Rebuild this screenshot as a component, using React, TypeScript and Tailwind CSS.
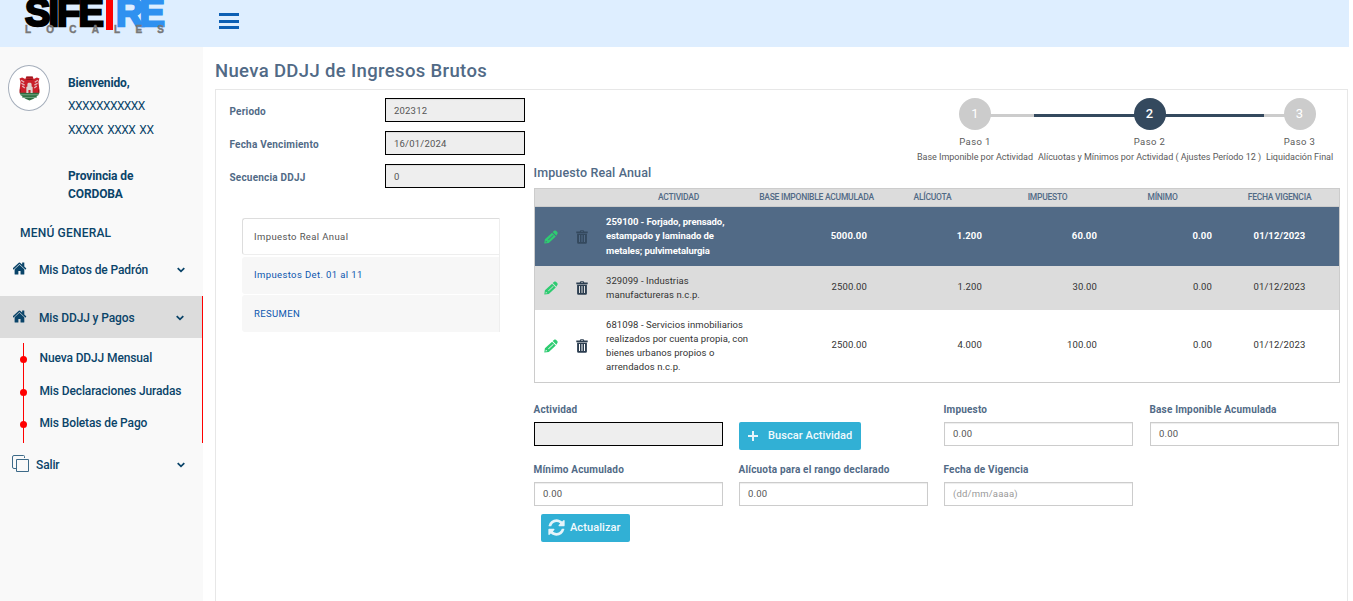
import React from "react";

const Home = () => (
  <svg viewBox="64 0 1664 1792" preserveAspectRatio="none" className="mb-[3px] ml-px h-[17px] w-[14px] shrink-0 fill-[#0a4469]">
    <path d="M1408 992v480q0 26-19 45t-45 19h-384v-384h-256v384h-384q-26 0-45-19t-19-45v-480q0-1 .5-3t.5-3l575-474 575 474q1 2 1 6zm223-69l-62 74q-8 9-21 11h-3q-13 0-21-7l-692-577-692 577q-12 8-24 7-13-2-21-11l-62-74q-8-10-7-23.5t11-21.5l719-599q32-26 76-26t76 26l244 204v-195q0-14 9-23t23-9h192q14 0 23 9t9 23v408l219 182q10 8 11 21.5t-7 23.5z" />
  </svg>
);

const Refresh = () => (
  <svg viewBox="0 0 1792 1792" className="-mt-[2px] h-[19px] w-[19px] shrink-0 fill-[#e6f4fa]">
    <path d="M1639 1056q0 5-1 7-64 268-268 434.5t-478 166.5q-146 0-282.5-55t-243.5-157l-129 129q-19 19-45 19t-45-19-19-45v-448q0-26 19-45t45-19h448q26 0 45 19t19 45-19 45l-137 137q71 66 161 102t187 36q134 0 250-65t186-179q11-17 53-117 8-23 30-23h192q13 0 22.5 9.5t9.5 22.5zm25-800v448q0 26-19 45t-45 19h-448q-26 0-45-19t-19-45 19-45l138-138q-148-137-349-137-134 0-250 65t-186 179q-11 17-53 117-8 23-30 23h-199q-13 0-22.5-9.5t-9.5-22.5v-7q65-268 270-434.5t480-166.5q146 0 284 55.5t245 156.5l130-129q19-19 45-19t45 19 19 45z" />
  </svg>
);

const Pencil = () => (
  <svg viewBox="0 0 14 14" className="h-[14px] w-[14px] fill-[#2ecc71]">
    <path fillRule="evenodd" d="M0.3 13.5 0.9 9.2 8.1 2.7 11.8 6.4 4.8 13zM1.5 12.4 3.2 12.1 1.9 10.8zM4.1 9.7 4.6 10.2 9.6 5.4 9.1 4.9zM8.7 2.1 10.5 0.6Q11.3 0.1 12 0.8L13.4 2.2Q14 3 13.5 3.7L12.4 5.8z" />
  </svg>
);

const Trash = ({ className }: { className: string }) => (
  <svg viewBox="0 0 12 14" className={"h-[14px] w-[12px] " + className}>
    <path fillRule="evenodd" d="M3.8 1.2Q4 0.2 5 0.2H7Q8 0.2 8.2 1.2V1.5H11.7V3.3H0.3V1.5H3.8zM5 1.1V1.6H7V1.1zM1.1 3.8H10.9V12.6Q10.9 13.8 9.7 13.8H2.3Q1.1 13.8 1.1 12.6zM3 5V12H4V5zM5.5 5V12H6.5V5zM8 5V12H9V5z" />
  </svg>
);

const Chevron = () => (
  <svg viewBox="0 0 8 6" className="h-[6px] w-[8px] fill-none stroke-[#0a4469] stroke-[1.8]">
    <path d="M0.7 1.2 4 4.3 7.3 1.2" />
  </svg>
);

const Crest = () => (
  <svg viewBox="0 0 20 26" preserveAspectRatio="none" className="h-[25px] w-[21px]">
    <path d="M0.5 2.5 3 1.5 6 3 7 0.5H13L14 3 17 1.5 19.5 2.5 18.5 6 19.4 14V18H0.6V14L1.5 6z" fill="#c9202a" />
    <path d="M0.6 17.5H19.4Q17.6 23 10 25.5 2.4 23 0.6 17.5z" fill="#2f7043" />
    <path d="M1 19.5H19M3 22.3H17" stroke="#78a887" strokeWidth="0.9" />
    <path d="M7 17.8V11.5L8 11V8L9 7H11L12 8V11L13 11.5V17.8H11V14.5H9V17.8z" fill="#ded3cf" />
    <path d="M2 4.5 5 6.5M2.3 7.5 5.3 9.5M3 10.5 5.5 12.5M18 4.5 15 6.5M17.7 7.5 14.7 9.5M17 10.5 14.5 12.5" stroke="#e3b4b8" strokeWidth="1.3" />
    <path d="M7 1.2H13M7 3.5H13M1.2 14V17M18.8 14V17" stroke="#761316" strokeWidth="0.8" />
  </svg>
);

function MenuItem({ label }: { label: string }) {
  return (
    <div className="flex h-full items-center pl-3">
      <Home />
      <span className="ml-3 flex-1">{label}</span>
      <span className="mr-[18px]"><Chevron /></span>
    </div>
  );
}

function ReadOnly({ label, value }: { label: string; value: string }) {
  return (
    <div className="flex h-[33px] items-start">
      <span className="-ml-[0.5px] w-[155.5px] pt-[6px] text-[10px] font-bold leading-[16px] tracking-[0.2px] text-[#516a86]">{label}</span>
      <div className="h-[24px] w-[140px] border border-black bg-[#eee] pl-2 text-[9.5px] leading-[23px] tracking-[0.2px] text-[#555] shadow-[inset_0_1px_1px_rgba(0,0,0,0.075)]">{value}</div>
    </div>
  );
}

function Field({ label, value, dim }: { label: string; value: string; dim?: boolean }) {
  return (
    <div>
      <div className="-ml-[0.5px] h-[19px] text-[10px] font-bold leading-[14px] tracking-[0.18px] text-[#516a86]">{label}</div>
      <div className={"h-6 w-[189px] border border-[#ccc] bg-white pl-2 text-[9.5px] leading-[21px] tracking-[0.2px] shadow-[inset_0_1px_1px_rgba(0,0,0,0.075)] " + (dim ? "text-[#999]" : "text-[#555]")}>{value}</div>
    </div>
  );
}

function Step({ n, title, text, active, box }: { n: number; title: string; text: string; active?: boolean; box: string }) {
  return (
    <div className={"flex flex-col items-center " + box}>
      <div className={"z-10 h-8 w-8 rounded-full text-center text-[13px] leading-[32px] text-white " + (active ? "bg-[#34495e] font-medium" : "bg-[#ccc]")}>{n}</div>
      <div className="mt-[5px] text-[9.5px] leading-[14px] tracking-[0.4px] text-[#5a5a5a]">{title}</div>
      <div className="mt-px whitespace-nowrap text-[9px] leading-[14px] tracking-[-0.03px] text-[#5a5a5a]">{text}</div>
    </div>
  );
}

const rows = [
  { text: ["259100 - Forjado, prensado,", "estampado y laminado de", "metales; pulvimetalurgia"], v: ["5000.00", "1.200", "60.00"], style: "h-[59px] bg-[#516a86] font-bold tracking-[-0.07px] text-white", icon: "fill-[#34495e]" },
  { text: ["329099 - Industrias", "manufactureras n.c.p."], v: ["2500.00", "1.200", "30.00"], style: "h-[44px] bg-[#dcdcdc] tracking-[0.07px] text-[#333]", icon: "fill-[#2c3e50]" },
  { text: ["681098 - Servicios inmobiliarios", "realizados por cuenta propia, con", "bienes urbanos propios o", "arrendados n.c.p."], v: ["2500.00", "4.000", "100.00"], style: "h-[72px] bg-white tracking-[0.07px] text-[#333]", icon: "fill-[#2c3e50]" },
];

export default function App() {
  return (
    <div className="flex h-[601px] w-[1353px] flex-col overflow-hidden bg-white font-['Roboto',sans-serif]">
      <header className="flex h-[47px] w-[1349px] shrink-0 bg-[#deeeff]">
        <div className="h-[47px] w-[218px] overflow-hidden pl-[25px]">
          <div className="-mt-[6px] flex h-[32px]">
            <span className="w-[81px] font-['Liberation_Sans',sans-serif] text-[38px] font-bold leading-[38px] tracking-[-1.9px] text-black [-webkit-text-stroke:2.4px_black]">SIFE</span>
            <span className="h-[36px] w-[7px] bg-[#f00]" />
            <span className="ml-[3px] font-['Liberation_Sans',sans-serif] text-[38px] font-bold leading-[38px] tracking-[-4px] text-[#2f91f0] [-webkit-text-stroke:2.4px_#2f91f0]">RE</span>
          </div>
          <div className="flex w-[139px] justify-between font-['Liberation_Sans',sans-serif] text-[10px] font-bold leading-[8px] text-[#777] [-webkit-text-stroke:0.4px_#777]">
            {"LOCALES".split("").map((c, i) => <span key={i}>{c}</span>)}
          </div>
        </div>
        <div className="ml-[0.5px] mt-[13px] flex h-4 w-[20px] flex-col justify-between">
          <i className="h-[3px] bg-[#0c5fb4]" /><i className="h-[3px] bg-[#0c5fb4]" /><i className="h-[3px] bg-[#0c5fb4]" />
        </div>
      </header>

      <div className="flex min-h-0 flex-1">
        <aside className="w-[203px] shrink-0 bg-[#f9f9f9] text-[12px] font-medium tracking-[-0.12px] text-[#0a4469]">
          <div className="flex h-[173px]">
            <div className="ml-2 mt-[18px] flex h-[46px] w-[42px] items-center justify-center rounded-[50%] border border-[#a5aebb] bg-white"><Crest /></div>
            <div className="ml-[18px] pt-[27px] leading-[18px]">
              <div className="font-bold">Bienvenido,</div>
              <div className="mt-[5px] font-normal tracking-[-0.54px]">XXXXXXXXXXX</div>
              <div className="mt-[6px] font-normal tracking-[-0.5px] [word-spacing:1.6px]">XXXXX XXXX XX</div>
              <div className="mt-[28px] font-bold">Provincia de<br />CORDOBA</div>
            </div>
          </div>
          <div className="h-[29px] pl-5 pt-[4px] leading-[18px] tracking-[0.2px]">MENÚ GENERAL</div>
          <div className="h-[42px]"><MenuItem label="Mis Datos de Padrón" /></div>
          <div className="mt-[5px] border-r border-[#f00]">
            <div className="h-[42px] bg-[#dcdcdc] pt-px"><MenuItem label="Mis DDJJ y Pagos" /></div>
            <div className="ml-[23px] mt-[5px] flex h-[100px] flex-col border-l border-[#f00]">
              {["Nueva DDJJ Mensual", "Mis Declaraciones Juradas", "Mis Boletas de Pago"].map((t) => (
                <div key={t} className="-ml-[4px] -mt-px mb-px flex h-[32.5px] items-center">
                  <i className="mt-[3px] h-[7px] w-[7px] rounded-full bg-[#f00]" />
                  <span className="ml-[12.5px] whitespace-nowrap">{t}</span>
                </div>
              ))}
            </div>
          </div>
          <div className="flex h-[42px] items-center pl-3 pt-px">
            <svg viewBox="0 0 17 17" className="mb-[3px] h-[17px] w-[17px] fill-none stroke-[#3d6a88]">
              <path d="M4.5 4.5H16.5V16.5H4.5zM4 13.5H2Q.5 13.5 .5 12V2Q.5.5 2 .5H11.5Q12.5.5 12.5 1.5V3" />
            </svg>
            <span className="ml-[7px] flex-1">Salir</span>
            <span className="mr-[18px]"><Chevron /></span>
          </div>
        </aside>

        <main className="ml-3 flex w-[1133px] flex-col">
          <h1 className="h-[42px] pt-[11px] text-[18.5px] font-medium leading-[26px] tracking-[0.35px] text-[#516a86]">Nueva DDJJ de Ingresos Brutos</h1>
          <section className="flex flex-1 border border-b-0 border-[#e7e7e7] pl-[14px]">
            <div className="w-[304px] shrink-0 pt-2">
              <ReadOnly label="Periodo" value="202312" />
              <ReadOnly label="Fecha Vencimiento" value="16/01/2024" />
              <ReadOnly label="Secuencia DDJJ" value="0" />
              <div className="ml-3 mt-[21px] w-[258px] border-r border-[#eee] text-[9.5px] leading-[37px] tracking-[0.38px]">
                <div className="h-[37px] rounded-l-[3px] border border-r-0 border-[#ddd] border-b-[#eee] pl-[11px] leading-[36px] text-[#555]">Impuesto Real Anual</div>
                <div className="mt-[2px] h-[37px] rounded-l-[3px] bg-[#f7f7f7] pl-[12px] leading-[36px] text-[#0c56ae]">Impuestos Det. 01 al 11</div>
                <div className="mt-[1px] h-[37px] rounded-l-[3px] bg-[#f7f7f7] pl-[12px] leading-[38px] text-[#0c56ae]">RESUMEN</div>
              </div>
            </div>

            <div className="w-[806px] shrink-0">
              <div className="relative ml-[383px] flex h-[72px] w-[416px] justify-between pt-2">
                <div className="absolute left-[73px] top-[24px] flex h-[3px] w-[309px]">
                  <i className="w-[44px] bg-[#ccc]" /><i className="w-[230px] bg-[#34495e]" /><i className="flex-1 bg-[#ccc]" />
                </div>
                <Step n={1} title="Paso 1" text="Base Imponible por Actividad" box="w-[116px]" />
                <Step n={2} title="Paso 2" text="Alícuotas y Mínimos por Actividad ( Ajustes Período 12 )" box="w-[232px]" active />
                <Step n={3} title="Paso 3" text="Liquidación Final" box="w-[67px]" />
              </div>
              <h2 className="-ml-[0.5px] h-[26px] pt-[1px] text-[12.5px] font-medium leading-[19px] tracking-[0.13px] text-[#516a86]">Impuesto Real Anual</h2>
              <table className="w-[806px] table-fixed border-separate border-spacing-0 border border-[#ccc]">
                <colgroup>
                  <col className="w-[31px]" /><col className="w-[33px]" /><col className="w-[159px]" /><col className="w-[117px]" /><col className="w-[115px]" /><col className="w-[115px]" /><col className="w-[115px]" /><col />
                </colgroup>
                <thead>
                  <tr className="h-[18px] bg-[#dcdcdc] text-[8.5px] font-medium leading-[17px] tracking-[-0.25px] text-[#516a86]">
                    {["", "", "ACTIVIDAD", "BASE IMPONIBLE ACUMULADA", "ALÍCUOTA", "IMPUESTO", "MÍNIMO", "FECHA VIGENCIA"].map((h, i) => (
                      <th key={i} className="whitespace-nowrap border-b border-[#ccc] p-0 font-medium">{h}</th>
                    ))}
                  </tr>
                </thead>
                <tbody className="text-[9.5px]">
                  {rows.map((r) => (
                    <tr key={r.text[0]} className={r.style}>
                      <td className="p-0 pl-[8.5px]"><Pencil /></td>
                      <td className="p-0 pl-[10px]"><Trash className={r.icon} /></td>
                      <td className="whitespace-nowrap p-0 pl-[7px] leading-[14.1px]">
                        {r.text.map((t) => <div key={t}>{t}</div>)}
                      </td>
                      <td className="p-0 pb-px pr-[8px] text-right tracking-[0.12px]">{r.v[0]}</td>
                      <td className="p-0 pb-px pr-[8px] text-right tracking-[0.12px]">{r.v[1]}</td>
                      <td className="p-0 pb-px pr-[8px] text-right tracking-[0.12px]">{r.v[2]}</td>
                      <td className="p-0 pb-px pr-[8px] text-right tracking-[0.12px]">0.00</td>
                      <td className="p-0 pb-px text-center tracking-[0.12px]">01/12/2023</td>
                    </tr>
                  ))}
                </tbody>
              </table>

              <div className="mt-5 grid h-[47px] grid-cols-[205px_205px_206px_190px]">
                <div>
                  <div className="-ml-[0.5px] h-[19px] text-[10px] font-bold leading-[14px] tracking-[0.18px] text-[#516a86]">Actividad</div>
                  <div className="h-6 w-[189px] border border-black bg-[#eee]" />
                </div>
                <button className="mt-[19px] flex h-7 w-[122px] items-center rounded-[2px] bg-[#31b0d5] pl-[9px] text-[11px] font-medium text-[#f2fafd]">
                  <svg viewBox="0 0 10 10" className="h-[10px] w-[10px] fill-[#e6f4fa]"><path d="M4 0h2v4h4v2H6v4H4V6H0V4h4z" /></svg>
                  <span className="ml-[10px] whitespace-nowrap pt-px tracking-[0.08px]">Buscar Actividad</span>
                </button>
                <Field label="Impuesto" value="0.00" />
                <Field label="Base Imponible Acumulada" value="0.00" />
              </div>
              <div className="mt-[12px] grid grid-cols-[205px_205px_206px_190px] pt-px">
                <Field label="Mínimo Acumulado" value="0.00" />
                <Field label="Alícuota para el rango declarado" value="0.00" />
                <Field label="Fecha de Vigencia" value="(dd/mm/aaaa)" dim />
              </div>
              <button className="ml-[7px] mt-2 flex h-7 w-[89px] items-center rounded-[2px] bg-[#31b0d5] pl-[6px] text-[11px] font-medium text-[#f2fafd]">
                <Refresh /><span className="ml-1 tracking-[0.08px]">Actualizar</span>
              </button>
            </div>
          </section>
        </main>
      </div>
    </div>
  );
}
